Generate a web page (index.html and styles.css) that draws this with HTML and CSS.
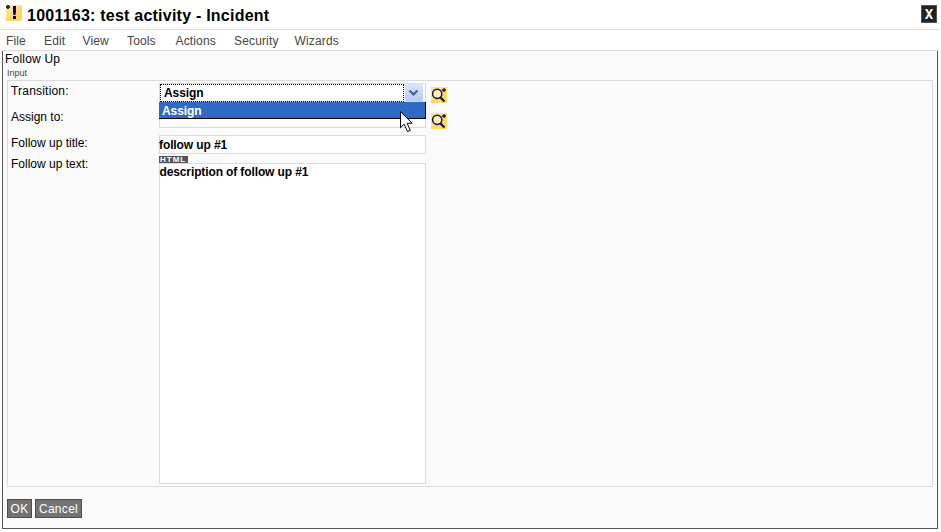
FILE: index.html
```
<!DOCTYPE html>
<html lang="en">
<head>
<meta charset="utf-8">
<title>1001163: test activity - Incident</title>
<link rel="stylesheet" href="styles.css">
</head>
<body>
<svg class="defs" width="0" height="0" aria-hidden="true">
  <symbol id="lookup" viewBox="0 0 16 16">
    <rect width="16" height="16" fill="#fdd966"/>
    <path d="M0 0h16L0 14z" fill="#ffe9a0" opacity=".6"/>
    <path d="M9 10l4.5 4.5" stroke="#151542" stroke-width="2.2"/>
    <circle cx="6.2" cy="6.8" r="4.6" fill="#fff0b8" stroke="#151542" stroke-width="1.5"/>
    <path d="M13 1v4M11 3h4" stroke="#20204d" stroke-width="1.4"/>
    <path d="M12 2h2v2h-2z" fill="#20204d"/>
  </symbol>
</svg>
<header class="titlebar">
  <svg class="logo" width="16" height="16" viewBox="0 0 16 16">
    <rect width="16" height="16" fill="#fdd663"/>
    <path d="M0 0h16L0 14z" fill="#ffe69a" opacity=".7"/>
    <path d="M1 0h2v1h1v2h-1v1h-2v-1h-1v-2h1z" fill="#27275c"/>
    <path d="M7 1h3v6l-.5 3h-2L7 7zM7 11h3v3H7z" fill="#000080"/>
  </svg>
  <h1>1001163: test activity - Incident</h1>
  <button class="close" aria-label="Close">X</button>
</header>
<nav class="menu">
  <span class="file">File</span><span class="edit">Edit</span><span class="view">View</span><span class="tools">Tools</span><span class="actions">Actions</span><span class="security">Security</span><span>Wizards</span>
</nav>
<main class="panel">
  <h2>Follow Up</h2>
  <div class="caption">Input</div>
  <section class="form">
    <div class="row">
      <div class="label transition">Transition:</div>
      <div class="select">
        <div class="value">Assign</div>
        <div class="arrow"><svg width="17" height="16" viewBox="0 0 17 16"><path d="M4.5 6.5l4 4 4-4" fill="none" stroke="#4d6185" stroke-width="2.2"/></svg></div>
        <div class="options">Assign
          <svg class="cursor" width="14" height="22" viewBox="0 0 14 22"><path d="M.5 .7v16l3.7-3.6 3.3 7.5 2.8-1.2-3.2-7.2h5.1z" fill="#fff" stroke="#000"/></svg>
        </div>
      </div>
      <svg class="lookup" width="16" height="16"><use href="#lookup"/></svg>
    </div>
    <div class="row">
      <div class="label">Assign to:</div>
      <div class="input"></div>
      <svg class="lookup" width="16" height="16"><use href="#lookup"/></svg>
    </div>
    <div class="row title-row">
      <div class="label">Follow up title:</div>
      <div class="input">follow up #1</div>
    </div>
    <div class="row text-row">
      <div class="label">Follow up text:</div>
      <div class="editor">
        <div class="badge">HTML</div>
        <div class="textarea">description of follow up #1</div>
      </div>
    </div>
  </section>
  <footer class="actions-bar"><button class="ok">OK</button><button class="cancel">Cancel</button></footer>
</main>
</body>
</html>
```
FILE: styles.css
```
* { box-sizing: border-box; }
body { margin: 0; height: 532px; overflow: hidden; background: #fff; color: #000; font: 12px/14px "Liberation Sans", Arial, sans-serif; }
.defs { position: absolute; }
.titlebar { height: 30px; margin: 0 2px 0 1px; border-bottom: 1px solid #dadada; display: flex; align-items: flex-start; padding: 5px 2px 0 5px; }
.logo { flex: none; }
h1 { margin: 2px 0 0 5px; font: bold 16px/18px "Liberation Sans", Arial, sans-serif; letter-spacing: .23px; white-space: nowrap; }
.close { margin-left: auto; width: 16px; height: 18px; padding: 0; border: 1px solid #555; background: #222; color: #fff; font: bold 14px/16px "DejaVu Sans Mono", monospace; }
.menu { height: 21px; margin: 0 2px 0 1px; padding: 4px 0 0 5px; border-bottom: 1px solid #dadada; display: flex; color: #444; letter-spacing: .15px; white-space: nowrap; }
.menu span { flex: none; }
.file { width: 38px; }
.edit { width: 38.5px; }
.view { width: 44.5px; }
.tools { width: 48.5px; }
.actions { width: 58.5px; }
.security { width: 60.5px; }
.panel { height: 478px; margin: 0 3px 0 2px; border: 1px solid #555; border-top: 0; background: #fafafa; padding: 1px 4px 0; }
h2 { margin: 0 0 0 -2px; font: 12px/14px "Liberation Sans", Arial, sans-serif; letter-spacing: .2px; }
.caption { font-size: 9px; line-height: 15px; color: #444; height: 14px; letter-spacing: 0; }
.form { height: 407px; border: 1px solid #dadada; padding: 2px 0 0 3px; }
.row { display: flex; align-items: flex-start; height: 26px; }
.label { width: 148px; flex: none; padding-top: 1px; }
.transition { letter-spacing: .2px; }
.select { position: relative; display: flex; width: 267px; height: 19px; border: 1px solid #dadada; background: #fff; font-weight: bold; flex: none; letter-spacing: -.1px; }
.value { width: 244px; height: 18px; border: 1px dotted #000; padding: 1px 0 0 3px; }
.arrow { width: 18px; height: 17px; margin-left: 1px; border-radius: 2px; background: linear-gradient(#dae5ff, #b4c9f7); }
.options { position: absolute; left: -1px; top: 18px; width: 267px; height: 17px; padding: 2px 0 0 3px; background: #316ac5; color: #fff; border-right: 1px solid #000; border-bottom: 1px solid #000; }
.cursor { position: absolute; left: 241px; top: 9px; }
.lookup { margin: 4px 0 0 5px; flex: none; }
.input { width: 267px; height: 19px; border: 1px solid #dadada; background: #fff; font-weight: bold; line-height: 18px; flex: none; letter-spacing: -.1px; text-indent: -1px; }
.title-row { height: 21px; }
.text-row { height: 350px; }
.editor { width: 267px; }
.badge { width: 29px; height: 7px; background: #555; color: #fff; font: bold 8px/7px "Liberation Sans", Arial, sans-serif; letter-spacing: 1px; padding-left: 1px; overflow: hidden; }
.textarea { height: 321px; border: 1px solid #dadada; background: #fff; font-weight: bold; padding-top: 1px; letter-spacing: -.12px; text-indent: -.5px; }
.actions-bar { display: flex; gap: 3px; margin-top: 12px; }
.actions-bar button { height: 19px; padding: 0; border: 1px solid #4d4d4d; background: #737373; color: #fff; font: 12px/16px "Liberation Sans", Arial, sans-serif; letter-spacing: .3px; }
.actions-bar .ok { width: 25px; }
.actions-bar .cancel { width: 47px; }
```
